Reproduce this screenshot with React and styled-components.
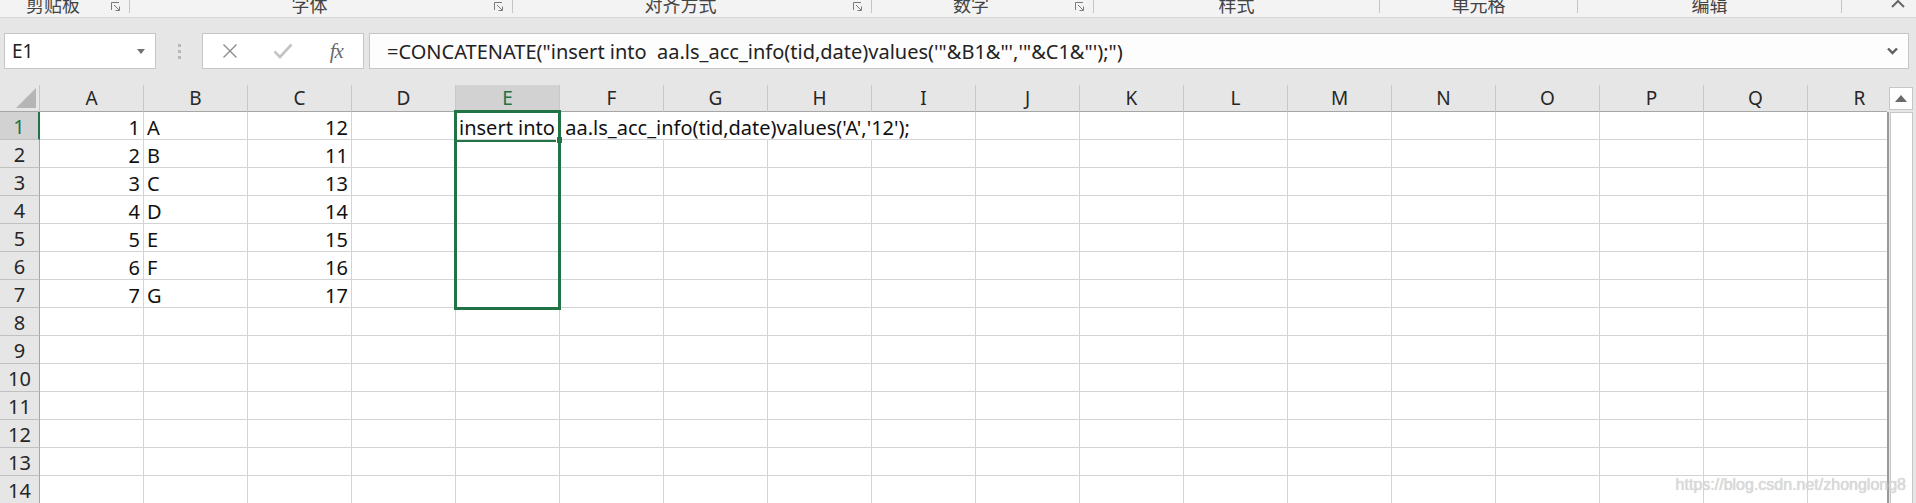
import React from 'react';
import styled, { createGlobalStyle } from 'styled-components';

const GlobalStyle = createGlobalStyle`
  html, body {
    margin: 0;
    padding: 0;
    background: #e6e6e6;
    overflow: hidden;
  }
  body {
    font-family: "Noto Sans", "Noto Sans CJK SC", sans-serif;
  }
`;

const GREEN = '#217346';

const Page = styled.div`
  position: relative;
  width: 1916px;
  height: 503px;
  overflow: hidden;
  background: #e6e6e6;
  display: flex;
  flex-direction: column;
`;

/* ribbon group labels (cut off at the top) */
const Ribbon = styled.div`
  flex: none;
  height: 17px;
  display: flex;
  background: #f3f3f3;
  border-bottom: 1px solid #d6d6d6;
  overflow: hidden;
`;

const Group = styled.div`
  flex: none;
  box-sizing: border-box;
  width: ${({ w }) => w}px;
  height: 13px;
  display: flex;
  border-right: 1px solid #c6c6c6;
`;

const GroupLabel = styled.div`
  flex: 1;
  margin-top: -5px;
  text-align: center;
  font-family: "Noto Sans CJK SC", sans-serif;
  font-size: 18px;
  line-height: 18px;
  color: #444;
  white-space: nowrap;
`;

const Launcher = styled.svg`
  flex: none;
  width: 9px;
  height: 9px;
  margin: 2px 9px 0 5px;
`;

const RibbonTail = styled.div`
  flex: 1;
  display: flex;
  justify-content: flex-end;
  padding-right: 11px;
`;

/* formula bar */
const FormulaRow = styled.div`
  flex: none;
  height: 36px;
  margin: 15px 0 16px;
  padding-left: 4px;
  display: flex;
  align-items: stretch;
`;

const Box = styled.div`
  box-sizing: border-box;
  background: #fff;
  border: 1px solid #c6c6c6;
  display: flex;
  align-items: center;
`;

const NameBox = styled(Box)`
  width: 152px;
  padding-left: 7px;
  font-size: 19px;
  color: #222;
`;

const NameArrow = styled.svg`
  margin-left: auto;
  margin-right: 10px;
`;

const Grip = styled.div`
  width: 46px;
  display: flex;
  flex-direction: column;
  align-items: center;
  justify-content: center;
  gap: 3px;

  span {
    width: 3px;
    height: 3px;
    background: #b8b8b8;
  }
`;

const FxBox = styled(Box)`
  width: 162px;
`;

const FxSlot = styled.div`
  width: 54px;
  display: flex;
  justify-content: center;
  align-items: center;
`;

const FxText = styled.span`
  font-family: "Liberation Serif", serif;
  font-style: italic;
  font-size: 21px;
  color: #6a6a6a;
  letter-spacing: -1px;
`;

const FormulaInput = styled(Box)`
  width: 1540px;
  margin-left: 5px;
  padding-left: 17px;
  padding-right: 10px;
  font-size: 20px;
  color: #222;
  white-space: pre;
  background: #fdfdfd;
`;

const FormulaText = styled.span`
  flex: 1;
`;

/* sheet */
const SheetArea = styled.div`
  flex: none;
  display: flex;
`;

const Sheet = styled.div`
  position: relative;
  width: 1887px;
  overflow: hidden;
  display: grid;
  grid-template-columns: 40px repeat(18, 104px);
  grid-template-rows: 27px;
  grid-auto-rows: 28px;
`;

const Corner = styled.div`
  box-sizing: border-box;
  border-right: 1px solid #c6c6c6;
  border-bottom: 1px solid #a6a6a6;
  display: flex;
  justify-content: flex-end;
  align-items: flex-end;
  padding: 0 3px 3px 0;
`;

const ColHead = styled.div`
  box-sizing: border-box;
  border-right: 1px solid #c8c8c8;
  border-bottom: 1px solid #a6a6a6;
  background: ${({ $active }) => ($active ? '#d2d2d2' : '#e6e6e6')};
  color: ${({ $active }) => ($active ? GREEN : '#262626')};
  font-size: 19px;
  line-height: 26px;
  text-align: center;
`;

const RowHead = styled.div`
  box-sizing: border-box;
  border-right: ${({ $active }) => ($active ? `2px solid ${GREEN}` : '1px solid #a6a6a6')};
  border-bottom: 1px solid #c0c0c0;
  background: ${({ $active }) => ($active ? '#d2d2d2' : '#e6e6e6')};
  color: ${({ $active }) => ($active ? GREEN : '#262626')};
  font-size: 20px;
  line-height: 26px;
  padding-top: 2px;
  text-align: center;
`;

const Cell = styled.div`
  box-sizing: border-box;
  background: #fff;
  border-right: 1px solid ${({ $open }) => ($open ? '#fff' : '#d4d4d4')};
  border-bottom: 1px solid #d4d4d4;
  padding: 3px 3px 0 3px;
  font-size: 20px;
  line-height: 26px;
  color: #111;
  text-align: ${({ $num }) => ($num ? 'right' : 'left')};
  white-space: pre;
  position: relative;
  z-index: ${({ $spill }) => ($spill ? 1 : 0)};
`;

const Selection = styled.div`
  position: absolute;
  left: 454px;
  top: 25px;
  width: 107px;
  height: 200px;
  box-sizing: border-box;
  border: 3px solid ${GREEN};
  z-index: 2;
  pointer-events: none;
`;

const ActiveLine = styled.div`
  position: absolute;
  left: 457px;
  top: 55px;
  width: 100px;
  height: 2px;
  background: ${GREEN};
  z-index: 2;
`;

const FillHandle = styled.div`
  position: absolute;
  left: 556px;
  top: 52px;
  width: 5px;
  height: 6px;
  background: ${GREEN};
  border-left: 1px solid #fff;
  z-index: 3;
`;

const ScrollCol = styled.div`
  width: 29px;
  display: flex;
  flex-direction: column;
`;

const ScrollHead = styled.div`
  box-sizing: border-box;
  height: 27px;
  padding: 2px 3px 2px 2px;
  display: flex;
`;

const ScrollBtn = styled(Box)`
  flex: 1;
  justify-content: center;
`;

const ScrollTrack = styled.div`
  flex: 1;
  display: flex;
  border-left: 2px solid #9a9a9a;
  padding: 0 3px 0 1px;
`;

const TrackBox = styled.div`
  flex: 1;
  background: #fff;
  border: 1px solid #c6c6c6;
  border-bottom: none;
`;

const Watermark = styled.div`
  position: absolute;
  right: 10px;
  top: 476px;
  font-family: "Liberation Sans", Arial, sans-serif;
  font-size: 16px;
  line-height: 18px;
  color: #dadada;
  text-shadow: 0 0 1px #c4c4c4;
  z-index: 5;
`;

const groups = [
  { label: '剪贴板', w: 130, launcher: true },
  { label: '字体', w: 383, launcher: true },
  { label: '对齐方式', w: 359, launcher: true },
  { label: '数字', w: 222, launcher: true },
  { label: '样式', w: 286 },
  { label: '单元格', w: 198 },
  { label: '编辑', w: 264 },
];

const cols = 'ABCDEFGHIJKLMNOPQR'.split('');

const data = {
  A: [1, 2, 3, 4, 5, 6, 7],
  B: ['A', 'B', 'C', 'D', 'E', 'F', 'G'],
  C: [12, 11, 13, 14, 15, 16, 17],
};

const FORMULA = `=CONCATENATE("insert into  aa.ls_acc_info(tid,date)values('"&B1&"','"&C1&"');")`;
const RESULT = `insert into  aa.ls_acc_info(tid,date)values('A','12');`;

const LauncherIcon = () => (
  <Launcher viewBox="0 0 9 9" fill="none" stroke="#7a7a7a" strokeWidth="1">
    <path d="M0.5 8V0.5H8" />
    <path d="M3 3l5 5M8.5 4.5v4h-4" />
  </Launcher>
);

const renderCell = (col, r) => {
  const key = `${col}${r}`;
  const vals = data[col];
  if (vals && r <= vals.length) {
    const v = vals[r - 1];
    return (
      <Cell key={key} $num={typeof v === 'number'}>
        {v}
      </Cell>
    );
  }
  if (r === 1 && col === 'E') {
    return (
      <Cell key={key} $spill $open>
        {RESULT}
      </Cell>
    );
  }
  const open = r === 1 && ['F', 'G', 'H'].includes(col);
  return <Cell key={key} $open={open} />;
};

const App = () => {
  const rows = Array.from({ length: 14 }, (_, i) => i + 1);
  return (
    <Page>
      <GlobalStyle />
      <Ribbon>
        {groups.map((g) => (
          <Group key={g.label} w={g.w}>
            <GroupLabel>{g.label}</GroupLabel>
            {g.launcher && <LauncherIcon />}
          </Group>
        ))}
        <RibbonTail>
          <svg width="14" height="8" viewBox="0 0 14 8" fill="none" stroke="#666" strokeWidth="2">
            <path d="M1 7l6-6 6 6" />
          </svg>
        </RibbonTail>
      </Ribbon>

      <FormulaRow>
        <NameBox>
          E1
          <NameArrow width="8" height="5" viewBox="0 0 8 5">
            <path d="M0 0h8L4 5z" fill="#707070" />
          </NameArrow>
        </NameBox>
        <Grip>
          <span />
          <span />
          <span />
        </Grip>
        <FxBox>
          <FxSlot>
            <svg width="16" height="16" viewBox="0 0 16 16" fill="none" stroke="#8c8c8c" strokeWidth="1.4">
              <path d="M1.5 1.5l13 13M14.5 1.5l-13 13" />
            </svg>
          </FxSlot>
          <FxSlot>
            <svg width="20" height="16" viewBox="0 0 20 16" fill="none" stroke="#c4c4c4" strokeWidth="2.6">
              <path d="M1.5 8.5l5.5 5.5L18.5 1.5" />
            </svg>
          </FxSlot>
          <FxSlot>
            <FxText>fx</FxText>
          </FxSlot>
        </FxBox>
        <FormulaInput>
          <FormulaText>{FORMULA}</FormulaText>
          <svg width="11" height="8" viewBox="0 0 11 8" fill="none" stroke="#5f5f5f" strokeWidth="2.4">
            <path d="M1 1.5l4.5 4.5L10 1.5" />
          </svg>
        </FormulaInput>
      </FormulaRow>

      <SheetArea>
        <Sheet>
          <Corner>
            <svg width="20" height="20" viewBox="0 0 20 20">
              <polygon points="0,20 20,20 20,0" fill="#b5b5b5" />
            </svg>
          </Corner>
          {cols.map((c) => (
            <ColHead key={c} $active={c === 'E'}>
              {c}
            </ColHead>
          ))}
          {rows.map((r) => (
            <React.Fragment key={r}>
              <RowHead $active={r === 1}>{r}</RowHead>
              {cols.map((c) => renderCell(c, r))}
            </React.Fragment>
          ))}
          <Selection />
          <ActiveLine />
          <FillHandle />
        </Sheet>
        <ScrollCol>
          <ScrollHead>
            <ScrollBtn>
              <svg width="12" height="7" viewBox="0 0 12 7">
                <path d="M0 7L6 0l6 7z" fill="#6a6a6a" />
              </svg>
            </ScrollBtn>
          </ScrollHead>
          <ScrollTrack>
            <TrackBox />
          </ScrollTrack>
        </ScrollCol>
      </SheetArea>

      <Watermark>https://blog.csdn.net/zhonglong8</Watermark>
    </Page>
  );
};

export default App;
